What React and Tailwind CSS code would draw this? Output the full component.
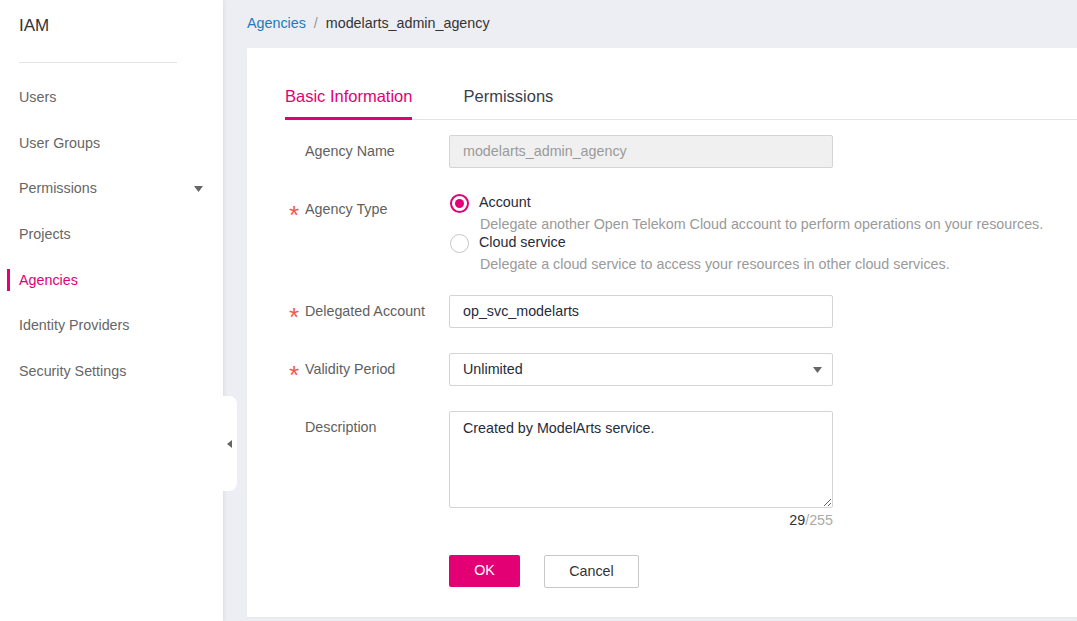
import React from "react";

const navItems = [
  "Users",
  "User Groups",
  "Permissions",
  "Projects",
  "Agencies",
  "Identity Providers",
  "Security Settings",
];

function Caret({ className = "" }) {
  return (
    <svg width="9" height="6" viewBox="0 0 9 6" className={className}>
      <path d="M0 0h9L4.5 6z" fill="#666" />
    </svg>
  );
}

function Required() {
  return (
    <span className="w-[16px] h-[32px] shrink-0 text-[26px] leading-[44px] text-[#f5574f] overflow-visible">*</span>
  );
}

function Label({ text, required }) {
  return (
    <div className="w-[164px] shrink-0 pl-[4px] flex items-start h-[32px] text-[14.3px] leading-[32px] text-[#5f5f5f]">
      {required ? <Required /> : <span className="w-[16px] shrink-0" />}
      <span>{text}</span>
    </div>
  );
}

function Radio({ checked, label, desc }) {
  return (
    <div>
      <div className="flex items-center h-[20px]">
        <span
          className={
            checked
              ? "w-[19px] h-[19px] rounded-full border-2 border-[#e20074] flex items-center justify-center ml-[1px]"
              : "w-[19px] h-[19px] rounded-full border border-[#c8c8c8] ml-[1px]"
          }
        >
          {checked && <span className="w-[9px] h-[9px] rounded-full bg-[#e20074]" />}
        </span>
        <span className="ml-[10px] text-[14.3px] text-[#252b3a]">{label}</span>
      </div>
      <div className="pl-[31px] mt-[2px] text-[14.3px] leading-[18px] text-[#9a9a9a]">{desc}</div>
    </div>
  );
}

export default function App() {
  return (
    <div className="h-screen w-full flex overflow-hidden font-['Liberation_Sans',Arial,sans-serif] bg-[#edeef3]">
      {/* sidebar */}
      <aside className="w-[223px] shrink-0 bg-white relative z-10 shadow-[1px_0_4px_rgba(0,0,0,0.08)] px-[19px]">
        <div className="h-[51px] leading-[52px] text-[17px] text-[#333]">IAM</div>
        <div className="mt-[11px] w-[158px] h-px bg-[#e3e3e3]" />
        <nav className="mt-[12px]">
          {navItems.map((item) => {
            const active = item === "Agencies";
            return (
              <div key={item} className="relative h-[45.67px] flex items-center justify-between text-[14.3px]">
                {active && <span className="absolute left-[-12px] top-[11px] w-[3px] h-[22px] bg-[#e20074]" />}
                <span className={active ? "text-[#e20074]" : "text-[#666]"}>{item}</span>
                {item === "Permissions" && <Caret className="mr-[1px]" />}
              </div>
            );
          })}
        </nav>
        <div className="absolute left-[222px] top-[396px] w-[15px] h-[95px] bg-white rounded-r-[8px] flex items-center justify-center">
          <svg width="5" height="8" viewBox="0 0 5 8">
            <path d="M5 0v8L0 4z" fill="#666" />
          </svg>
        </div>
      </aside>

      {/* main */}
      <main className="flex-1 flex flex-col pl-[24px] pb-[4px] min-w-0">
        <div className="h-[48px] flex items-center text-[14.3px] shrink-0">
          <span className="text-[#1a7bbd]">Agencies</span>
          <span className="mx-[8px] text-[#999]">/</span>
          <span className="text-[#333]">modelarts_admin_agency</span>
        </div>

        <section className="flex-1 bg-white pl-[38px] pt-[38px] shadow-[0_1px_2px_rgba(0,0,0,0.04)]">
          {/* tabs */}
          <div className="flex gap-[51px] border-b border-[#e3e3e3] text-[16.5px]">
            <div className="leading-[20px] pb-[11px] border-b-[3px] border-[#e20074] text-[#e20074] -mb-px">
              Basic Information
            </div>
            <div className="leading-[20px] pb-[11px] text-[#3a3f4b]">Permissions</div>
          </div>

          <div className="mt-[15px] flex flex-col">
            <div className="flex">
              <Label text="Agency Name" />
              <div className="w-[384px] h-[33px] border border-[#d4d4d4] bg-[#f0f0f0] rounded-[2px] px-[13px] flex items-center text-[14.3px] text-[#9a9a9a]">
                modelarts_admin_agency
              </div>
            </div>

            <div className="flex mt-[25px]">
              <Label text="Agency Type" required />
              <div className="flex flex-col">
                <Radio
                  checked
                  label="Account"
                  desc="Delegate another Open Telekom Cloud account to perform operations on your resources."
                />
                <Radio
                  label="Cloud service"
                  desc="Delegate a cloud service to access your resources in other cloud services."
                />
              </div>
            </div>

            <div className="flex mt-[22px]">
              <Label text="Delegated Account" required />
              <div className="w-[384px] h-[33px] border border-[#d4d4d4] bg-white rounded-[2px] px-[13px] flex items-center text-[14.3px] text-[#252b3a]">
                op_svc_modelarts
              </div>
            </div>

            <div className="flex mt-[25px]">
              <Label text="Validity Period" required />
              <div className="w-[384px] h-[33px] border border-[#d4d4d4] bg-white rounded-[2px] pl-[13px] pr-[10px] flex items-center justify-between text-[14.3px] text-[#252b3a]">
                <span>Unlimited</span>
                <Caret />
              </div>
            </div>

            <div className="flex mt-[25px]">
              <Label text="Description" />
              <div className="w-[384px]">
                <textarea
                  readOnly
                  value="Created by ModelArts service."
                  className="block w-full h-[97px] border border-[#d4d4d4] rounded-[2px] px-[13px] pt-[7px] text-[14.3px] leading-[18px] text-[#252b3a] outline-none"
                />
                <div className="mt-[2px] text-right text-[14.3px] leading-[20px]">
                  <span className="text-[#333]">29</span>
                  <span className="text-[#aaa]">/255</span>
                </div>
              </div>
            </div>

            <div className="flex mt-[25px] pl-[164px] gap-[24px]">
              <button className="w-[71px] h-[32px] bg-[#e20074] text-white text-[14.3px] rounded-[2px]">OK</button>
              <button className="w-[95px] h-[33px] border border-[#c8c8c8] bg-white text-[#333] text-[14.3px] rounded-[2px]">
                Cancel
              </button>
            </div>
          </div>
        </section>
      </main>
    </div>
  );
}
